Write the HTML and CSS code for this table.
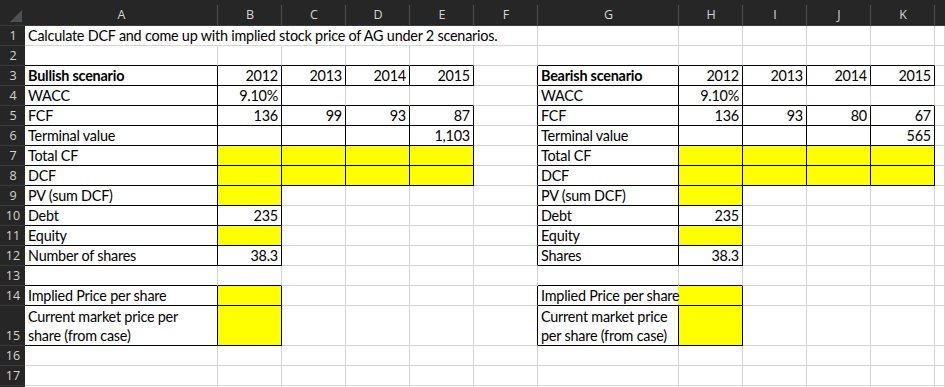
FILE: index.html
```html
<!DOCTYPE html>
<html lang="en">
<head>
<meta charset="utf-8">
<title>DCF sheet</title>
<link rel="stylesheet" href="styles.css">
</head>
<body>
<div class="sheet">
  <!-- header row -->
  <div class="corner"><svg width="25" height="26" viewBox="0 0 25 26"><polygon points="22,10 22,22 10,22" fill="#505050"/></svg></div>
  <div class="ch">A</div><div class="ch">B</div><div class="ch">C</div><div class="ch">D</div><div class="ch">E</div><div class="ch">F</div><div class="ch">G</div><div class="ch">H</div><div class="ch">I</div><div class="ch">J</div><div class="ch">K</div><div class="ch last"></div>

  <!-- row 1 -->
  <div class="rh">1</div>
  <div class="c span6">Calculate DCF and come up with implied stock price of AG under 2 scenarios.</div>
  <div class="c"></div><div class="c"></div><div class="c"></div><div class="c"></div><div class="c"></div><div class="c"></div>

  <!-- row 2 -->
  <div class="rh">2</div>
  <div class="c b"></div><div class="c b"></div><div class="c b"></div><div class="c b"></div><div class="c b"></div><div class="c"></div>
  <div class="c b"></div><div class="c b"></div><div class="c b"></div><div class="c b"></div><div class="c b"></div><div class="c"></div>

  <!-- row 3 -->
  <div class="rh">3</div>
  <div class="c r b bold">Bullish scenario</div><div class="c r b n">2012</div><div class="c r b n">2013</div><div class="c r b n">2014</div><div class="c r b n">2015</div><div class="c r"></div>
  <div class="c r b bold">Bearish scenario</div><div class="c r b n">2012</div><div class="c r b n">2013</div><div class="c r b n">2014</div><div class="c r b n">2015</div><div class="c"></div>

  <!-- row 4 -->
  <div class="rh">4</div>
  <div class="c r b">WACC</div><div class="c r b n">9.10%</div><div class="c b"></div><div class="c b"></div><div class="c b"></div><div class="c r"></div>
  <div class="c r b">WACC</div><div class="c r b n">9.10%</div><div class="c b"></div><div class="c b"></div><div class="c b"></div><div class="c"></div>

  <!-- row 5 -->
  <div class="rh">5</div>
  <div class="c r b">FCF</div><div class="c r b n">136</div><div class="c r b n">99</div><div class="c r b n">93</div><div class="c r b n">87</div><div class="c r"></div>
  <div class="c r b">FCF</div><div class="c r b n">136</div><div class="c r b n">93</div><div class="c r b n">80</div><div class="c r b n">67</div><div class="c"></div>

  <!-- row 6 -->
  <div class="rh">6</div>
  <div class="c r b">Terminal value</div><div class="c r b"></div><div class="c r b"></div><div class="c r b"></div><div class="c r b n">1,103</div><div class="c r"></div>
  <div class="c r b">Terminal value</div><div class="c r b"></div><div class="c r b"></div><div class="c r b"></div><div class="c r b n">565</div><div class="c"></div>

  <!-- row 7 -->
  <div class="rh">7</div>
  <div class="c r b">Total CF</div><div class="c r b y"></div><div class="c r b y"></div><div class="c r b y"></div><div class="c r b y"></div><div class="c r"></div>
  <div class="c r b">Total CF</div><div class="c r b y"></div><div class="c r b y"></div><div class="c r b y"></div><div class="c r b y"></div><div class="c"></div>

  <!-- row 8 -->
  <div class="rh">8</div>
  <div class="c r b">DCF</div><div class="c r b y"></div><div class="c r b y"></div><div class="c r b y"></div><div class="c r b y"></div><div class="c r"></div>
  <div class="c r b">DCF</div><div class="c r b y"></div><div class="c r b y"></div><div class="c r b y"></div><div class="c r b y"></div><div class="c"></div>

  <!-- row 9 -->
  <div class="rh">9</div>
  <div class="c r b">PV (sum DCF)</div><div class="c r b y"></div><div class="c"></div><div class="c"></div><div class="c"></div><div class="c r"></div>
  <div class="c r b">PV (sum DCF)</div><div class="c r b y"></div><div class="c"></div><div class="c"></div><div class="c"></div><div class="c"></div>

  <!-- row 10 -->
  <div class="rh">10</div>
  <div class="c r b">Debt</div><div class="c r b n">235</div><div class="c"></div><div class="c"></div><div class="c"></div><div class="c r"></div>
  <div class="c r b">Debt</div><div class="c r b n">235</div><div class="c"></div><div class="c"></div><div class="c"></div><div class="c"></div>

  <!-- row 11 -->
  <div class="rh">11</div>
  <div class="c r b">Equity</div><div class="c r b y"></div><div class="c"></div><div class="c"></div><div class="c"></div><div class="c r"></div>
  <div class="c r b">Equity</div><div class="c r b y"></div><div class="c"></div><div class="c"></div><div class="c"></div><div class="c"></div>

  <!-- row 12 -->
  <div class="rh">12</div>
  <div class="c r b">Number of shares</div><div class="c r b n">38.3</div><div class="c"></div><div class="c"></div><div class="c"></div><div class="c r"></div>
  <div class="c r b">Shares</div><div class="c r b n">38.3</div><div class="c"></div><div class="c"></div><div class="c"></div><div class="c"></div>

  <!-- row 13 -->
  <div class="rh">13</div>
  <div class="c b"></div><div class="c b"></div><div class="c"></div><div class="c"></div><div class="c"></div><div class="c"></div>
  <div class="c b"></div><div class="c b"></div><div class="c"></div><div class="c"></div><div class="c"></div><div class="c"></div>

  <!-- row 14 -->
  <div class="rh">14</div>
  <div class="c r b">Implied Price per share</div><div class="c r b y"></div><div class="c"></div><div class="c"></div><div class="c"></div><div class="c r"></div>
  <div class="c r b span2 half">Implied Price per share</div><div class="c"></div><div class="c"></div><div class="c"></div><div class="c"></div>

  <!-- row 15 -->
  <div class="rh">15</div>
  <div class="c r b wrap">Current market price per<br>share (from case)</div><div class="c r b y"></div><div class="c"></div><div class="c"></div><div class="c"></div><div class="c r"></div>
  <div class="c r b wrap">Current market price<br>per share (from case)</div><div class="c r b y"></div><div class="c"></div><div class="c"></div><div class="c"></div><div class="c"></div>

  <!-- row 16 -->
  <div class="rh">16</div>
  <div class="c"></div><div class="c"></div><div class="c"></div><div class="c"></div><div class="c"></div><div class="c"></div>
  <div class="c"></div><div class="c"></div><div class="c"></div><div class="c"></div><div class="c"></div><div class="c"></div>

  <!-- row 17 -->
  <div class="rh">17</div>
  <div class="c"></div><div class="c"></div><div class="c"></div><div class="c"></div><div class="c"></div><div class="c"></div>
  <div class="c"></div><div class="c"></div><div class="c"></div><div class="c"></div><div class="c"></div><div class="c"></div>

  <!-- row 18 (only its top edge is in view) -->
  <div class="rh"></div>
  <div class="c"></div><div class="c"></div><div class="c"></div><div class="c"></div><div class="c"></div><div class="c"></div>
  <div class="c"></div><div class="c"></div><div class="c"></div><div class="c"></div><div class="c"></div><div class="c"></div>
</div>
</body>
</html>
```
FILE: styles.css
```css
* { box-sizing: border-box; }
html, body { margin: 0; padding: 0; background: #ffffff; }
body { width: 945px; height: 387px; overflow: hidden; }

.sheet {
  display: grid;
  grid-template-columns: 25px 193px 64px 64px 64px 64px 64px 141px 64px 64px 64px 64px 1fr;
  grid-template-rows: 26px repeat(14, 20px) 40px repeat(3, 20px);
  width: 945px;
  height: 387px;
  overflow: hidden;
  font-family: Lato, "Noto Sans", sans-serif;
  font-size: 14.4px;
  letter-spacing: -0.22px;
  color: #000;
}

.corner {
  background: #262626;
  border-bottom: 1px solid #3a3a3a;
}
.corner svg { display: block; }

.ch {
  background: linear-gradient(#4e4e4e, #4e4e4e) right bottom / 1px 20px no-repeat, #262626;
  border-bottom: 1px solid #3a3a3a;
  color: #d4d4d4;
  font-family: "Open Sans", sans-serif;
  font-size: 12.5px;
  letter-spacing: 0;
  display: flex;
  align-items: center;
  justify-content: center;
  padding-top: 3px;
}
.ch.last { background: #262626; }

.rh {
  background: #262626;
  border-bottom: 1px solid #3a3a3a;
  color: #d4d4d4;
  font-family: "Open Sans", sans-serif;
  font-size: 12.5px;
  letter-spacing: 0;
  line-height: 19px;
  display: flex;
  align-items: flex-end;
  justify-content: center;
  padding-left: 1px;
}

.c {
  border-right: 1px solid #d4d4d4;
  border-bottom: 1px solid #d4d4d4;
  line-height: 19px;
  padding: 0 3px;
  display: flex;
  align-items: flex-end;
  white-space: nowrap;
  overflow: visible;
}
.c.r { border-right-color: #000; }
.c.b { border-bottom-color: #000; }
.c.y { background: #ffff00; }
.c.n { justify-content: flex-end; }
.c.bold { font-weight: 700; }
.c.span6 { grid-column: span 6; }
.c.span2 { grid-column: span 2; }
.c.half { background: linear-gradient(to right, #ffffff 140px, #ffff00 140px); }
.c.wrap { white-space: normal; }
```
